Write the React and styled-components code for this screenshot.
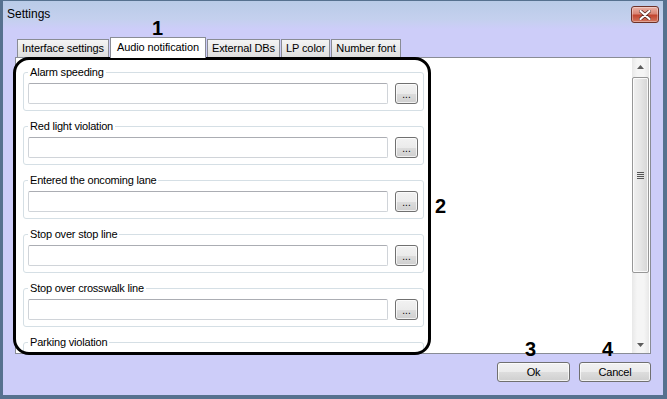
import styled, { createGlobalStyle } from 'styled-components';

const GlobalStyle = createGlobalStyle`
    html, body {
        margin: 0;
        padding: 0;
        background: #ffffff;
    }
    #root {
        width: 667px;
        height: 399px;
    }
`;

const groups = [
    'Alarm speeding',
    'Red light violation',
    'Entered the oncoming lane',
    'Stop over stop line',
    'Stop over crosswalk line',
    'Parking violation',
];

const tabs = ['Interface settings', 'Audio notification', 'External DBs', 'LP color', 'Number font'];

function Arrow({ down }) {
    return (
        <svg width="7" height="4" viewBox="0 0 7 4">
            <path d={down ? 'M0 0 H7 L3.5 4 Z' : 'M0 4 H7 L3.5 0 Z'} fill="#5c5c5c" />
        </svg>
    );
}

function App() {
    return (
        <>
            <GlobalStyle />
            <Window>
                <TitleBar>
                    <Title>Settings</Title>
                    <CloseButton>
                        <svg width="12" height="10" viewBox="0 0 12 10">
                            <path d="M1.5 1 L10.5 9 M10.5 1 L1.5 9" stroke="#5a2a22" strokeWidth="3.6" strokeLinecap="round" />
                            <path d="M1.5 1 L10.5 9 M10.5 1 L1.5 9" stroke="#ffffff" strokeWidth="2.2" strokeLinecap="round" />
                        </svg>
                    </CloseButton>
                </TitleBar>

                <Body>
                    <TabStrip>
                        {tabs.map((t, i) => (
                            <Tab key={t} $active={i === 1}>{t}</Tab>
                        ))}
                    </TabStrip>
                    <Panel>
                        <ScrollArea>
                            {groups.map(g => (
                                <Group key={g}>
                                    <Legend>{g}</Legend>
                                    <Row>
                                        <TextBox />
                                        <DotsButton>...</DotsButton>
                                    </Row>
                                </Group>
                            ))}
                        </ScrollArea>
                        <Scrollbar>
                            <ArrowCell><Arrow /></ArrowCell>
                            <Track>
                                <Thumb>
                                    <Grip />
                                </Thumb>
                            </Track>
                            <ArrowCell><Arrow down /></ArrowCell>
                        </Scrollbar>
                    </Panel>
                </Body>

                <Footer>
                    <DialogButton $width={73}>Ok</DialogButton>
                    <DialogButton $width={72}>Cancel</DialogButton>
                </Footer>

                <Highlight />
                <Callout $x={149} $y={17}>1</Callout>
                <Callout $x={432} $y={195}>2</Callout>
                <Callout $x={522} $y={338}>3</Callout>
                <Callout $x={599} $y={338}>4</Callout>
            </Window>
        </>
    );
}

const Window = styled.div`
    position: relative;
    box-sizing: border-box;
    width: 667px;
    height: 399px;
    display: flex;
    flex-direction: column;
    background: #cdcdf9;
    border-style: solid;
    border-color: #56718f;
    border-width: 1px 4px 4px 3px;
    font-family: "Liberation Sans", Arial, sans-serif;
    font-size: 11px;
    color: #000;
    overflow: hidden;
`;

const TitleBar = styled.div`
    height: 28px;
    display: flex;
    align-items: center;
    padding: 0 4px;
    background: linear-gradient(#b9cbe7, #c4d0ee 65%, #cdcdf9);
`;

const Title = styled.span`
    font-size: 12px;
    margin-top: -2px;
`;

const CloseButton = styled.div`
    box-sizing: border-box;
    margin-left: auto;
    align-self: flex-start;
    margin-top: 5px;
    width: 28px;
    height: 17px;
    display: flex;
    align-items: center;
    justify-content: center;
    border: 1px solid #6d3128;
    border-radius: 3px;
    background: linear-gradient(#eab1a6, #d98675 45%, #c2452f 55%, #d2765f);
    box-shadow: inset 0 0 0 1px rgba(255, 255, 255, 0.35);
`;

const Body = styled.div`
    display: flex;
    flex-direction: column;
    padding: 8px 12px 0 12px;
`;

const TabStrip = styled.div`
    display: flex;
    align-items: flex-end;
    height: 20px;
    padding-left: 2px;
`;

const Tab = styled.div`
    position: relative;
    box-sizing: border-box;
    height: ${p => (p.$active ? '21px' : '18px')};
    margin-bottom: ${p => (p.$active ? '-1px' : '0')};
    margin-right: 1px;
    padding: ${p => (p.$active ? '2px 6px 0' : '1px 4px 0')};
    border: 1px solid #898c95;
    border-bottom: none;
    background: ${p => (p.$active ? '#ffffff' : 'linear-gradient(#f4f4f4, #e9e9e9 50%, #dedede)')};
    z-index: ${p => (p.$active ? 1 : 0)};
    letter-spacing: -0.1px;
    line-height: 15px;
    white-space: nowrap;
`;

const Panel = styled.div`
    box-sizing: border-box;
    height: 297px;
    display: flex;
    border: 1px solid #898c95;
    background: #ffffff;
`;

const ScrollArea = styled.div`
    flex: 1;
    overflow: hidden;
    display: flex;
    flex-direction: column;
    gap: 9px;
    padding: 8px 0 0 7px;
`;

const Group = styled.fieldset`
    box-sizing: border-box;
    width: 401px;
    min-width: 0;
    margin: 0;
    padding: 4px 5px 6px 4px;
    border: 1px solid #d5dfe5;
    border-radius: 3px;
    flex-shrink: 0;
`;

const Legend = styled.legend`
    padding: 0 2px;
    line-height: 13px;
    letter-spacing: -0.2px;
`;

const Row = styled.div`
    display: flex;
    gap: 7px;
`;

const TextBox = styled.div`
    box-sizing: border-box;
    width: 360px;
    height: 21px;
    border: 1px solid #d0d4d9;
    border-top-color: #abadb3;
    border-radius: 2px;
    background: #ffffff;
`;

const ButtonFace = styled.div`
    box-sizing: border-box;
    display: flex;
    align-items: center;
    justify-content: center;
    border: 1px solid #707070;
    border-radius: 3px;
    background: linear-gradient(#f2f2f2, #ebebeb 50%, #dddddd 51%, #cfcfcf);
    box-shadow: inset 0 0 0 1px rgba(255, 255, 255, 0.7);
`;

const DotsButton = styled(ButtonFace)`
    width: 23px;
    height: 21px;
    font-size: 10px;
    padding-top: 2px;
`;

const Scrollbar = styled.div`
    width: 17px;
    margin-right: 1px;
    display: flex;
    flex-direction: column;
    background: linear-gradient(90deg, #e8e8e8, #f5f5f5 30%, #f5f5f5 70%, #e8e8e8);
`;

const ArrowCell = styled.div`
    height: 17px;
    display: flex;
    align-items: center;
    justify-content: center;
`;

const Track = styled.div`
    flex: 1;
    padding-top: 2px;
`;

const Thumb = styled.div`
    box-sizing: border-box;
    height: 196px;
    display: flex;
    align-items: center;
    justify-content: center;
    border: 1px solid #979797;
    border-radius: 2px;
    background: linear-gradient(90deg, #f0f0f0, #e6e6e6 50%, #d6d6d6);
    box-shadow: inset 0 0 0 1px rgba(255, 255, 255, 0.8);
`;

const Grip = styled.div`
    width: 7px;
    height: 7px;
    background: repeating-linear-gradient(#555 0 1px, transparent 1px 2px);
`;

const Footer = styled.div`
    display: flex;
    justify-content: flex-end;
    gap: 9px;
    padding: 8px 12px 0 0;
`;

const DialogButton = styled(ButtonFace)`
    width: ${p => p.$width}px;
    height: 20px;
    font-size: 11px;
    letter-spacing: -0.2px;
`;

const Highlight = styled.div`
    position: absolute;
    left: 10px;
    top: 56px;
    box-sizing: border-box;
    width: 418px;
    height: 298px;
    border: 3px solid #000;
    border-radius: 16px;
    pointer-events: none;
`;

const Callout = styled.div`
    position: absolute;
    left: ${p => p.$x}px;
    top: ${p => p.$y}px;
    font-family: "Liberation Sans", Arial, sans-serif;
    font-size: 20px;
    font-weight: bold;
    line-height: 20px;
`;

export default App;
